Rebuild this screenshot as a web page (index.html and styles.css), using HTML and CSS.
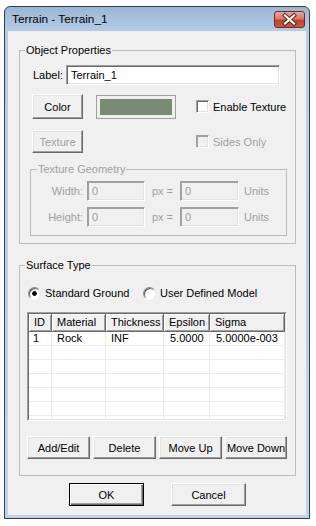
FILE: index.html
```html
<!DOCTYPE html>
<html>
<head>
<meta charset="utf-8">
<title>Terrain - Terrain_1</title>
<link rel="stylesheet" href="styles.css">
</head>
<body>
<div class="window">
  <div class="titlebar">
    <span class="title">Terrain - Terrain_1</span>
    <div class="close">
      <svg width="31" height="17" viewBox="0 0 31 17">
        <path d="M11 4.5 L20 12.5 M20 4.5 L11 12.5" stroke="#5a2a22" stroke-width="4.2" stroke-linecap="square" fill="none"/>
        <path d="M11 4.5 L20 12.5 M20 4.5 L11 12.5" stroke="#ffffff" stroke-width="2.2" stroke-linecap="square" fill="none"/>
      </svg>
    </div>
  </div>
  <div class="client">
    <fieldset class="group group-object">
      <legend>Object Properties</legend>
      <div class="row row-label">
        <span class="lbl">Label:</span>
        <div class="edit edit-label">Terrain_1</div>
      </div>
      <div class="row row-color">
        <div class="btn btn-small">Color</div>
        <div class="swatch"><div class="swatch-fill"></div></div>
        <div class="check check-enable"><span class="box"></span><span>Enable Texture</span></div>
      </div>
      <div class="row row-texture">
        <div class="btn btn-small btn-disabled">Texture</div>
        <div class="check check-sides disabled"><span class="box"></span><span>Sides Only</span></div>
      </div>
      <fieldset class="group group-geom disabled">
        <legend>Texture Geometry</legend>
        <div class="geom-row geom-first">
          <span class="geom-lbl">Width:</span>
          <div class="edit edit-disabled edit-px">0</div>
          <span class="geom-eq">px =</span>
          <div class="edit edit-disabled edit-units">0</div>
          <span class="geom-units">Units</span>
        </div>
        <div class="geom-row geom-second">
          <span class="geom-lbl">Height:</span>
          <div class="edit edit-disabled edit-px">0</div>
          <span class="geom-eq">px =</span>
          <div class="edit edit-disabled edit-units">0</div>
          <span class="geom-units">Units</span>
        </div>
      </fieldset>
    </fieldset>

    <fieldset class="group group-surface">
      <legend>Surface Type</legend>
      <div class="row row-radios">
        <div class="radio radio-first"><span class="dot checked"></span><span>Standard Ground</span></div>
        <div class="radio"><span class="dot"></span><span>User Defined Model</span></div>
      </div>
      <div class="list">
        <div class="list-inner">
          <div class="grid-row grid-head">
            <div class="hcell">ID</div>
            <div class="hcell">Material</div>
            <div class="hcell">Thickness</div>
            <div class="hcell">Epsilon</div>
            <div class="hcell">Sigma</div>
          </div>
          <div class="grid-body">
            <div class="grid-row">
              <div class="cell cell-id">1</div>
              <div class="cell">Rock</div>
              <div class="cell">INF</div>
              <div class="cell cell-num">5.0000</div>
              <div class="cell cell-num">5.0000e-003</div>
            </div>
            <div class="grid-row"><div class="cell"></div><div class="cell"></div><div class="cell"></div><div class="cell"></div><div class="cell"></div></div>
            <div class="grid-row"><div class="cell"></div><div class="cell"></div><div class="cell"></div><div class="cell"></div><div class="cell"></div></div>
            <div class="grid-row"><div class="cell"></div><div class="cell"></div><div class="cell"></div><div class="cell"></div><div class="cell"></div></div>
            <div class="grid-row"><div class="cell"></div><div class="cell"></div><div class="cell"></div><div class="cell"></div><div class="cell"></div></div>
            <div class="grid-row"><div class="cell"></div><div class="cell"></div><div class="cell"></div><div class="cell"></div><div class="cell"></div></div>
            <div class="grid-row"><div class="cell"></div><div class="cell"></div><div class="cell"></div><div class="cell"></div><div class="cell"></div></div>
          </div>
        </div>
      </div>
      <div class="row row-actions">
        <div class="btn btn-action">Add/Edit</div>
        <div class="btn btn-action">Delete</div>
        <div class="btn btn-action">Move Up</div>
        <div class="btn btn-action btn-last">Move Down</div>
      </div>
    </fieldset>

    <div class="row row-dialog">
      <div class="btn btn-dialog btn-default">OK</div>
      <div class="btn btn-dialog btn-cancel">Cancel</div>
    </div>
  </div>
</div>
</body>
</html>
```
FILE: styles.css
```css
* { box-sizing: border-box; }
html, body { margin: 0; padding: 0; background: #ffffff; }
body {
  font-family: "Liberation Sans", Arial, sans-serif;
  font-size: 11px;
  color: #000000;
}

/* window frame */
.window {
  margin: 6px 0 0 4px;
  width: 306px;
  height: 513px;
  border: 1px solid #383e48;
  border-radius: 6px 6px 0 0;
  padding: 0 3px 3px 3px;
  background: linear-gradient(#9ab5d5 0px, #b6cde8 25px, #bfd4ec 100%);
  display: flex;
  flex-direction: column;
}
.titlebar {
  height: 24px;
  display: flex;
  align-items: flex-start;
  justify-content: space-between;
}
.title {
  margin: 5px 0 0 4px;
  font-size: 11.8px;
  line-height: 14px;
  color: #000;
}
.close {
  margin: 4px 1px 0 0;
  width: 31px;
  height: 17px;
  border: 1px solid #6e2c22;
  border-radius: 3px;
  background: linear-gradient(#e8a89a 0%, #d47a68 45%, #c0412e 55%, #c95a43 100%);
  display: flex;
}
.close svg { margin: -1px; display: block; }

.client {
  height: 484px;
  background: #f0f0f0;
  display: flex;
  flex-direction: column;
}

/* group boxes */
.group {
  margin: 0;
  padding: 0;
  border: 1px solid #bcbcbc;
  min-inline-size: 0;
}
.group > legend {
  padding: 0 1px;
  line-height: 14px;
  height: 14px;
}
.group-object {
  margin: 12px 0 0 11px;
  width: 277px;
}
.group-object > legend { margin-left: 5px; }

.row { display: flex; align-items: center; }

.row-label { margin-top: 8px; height: 20px; }
.lbl { margin-left: 13px; width: 33px; }
.edit {
  height: 20px;
  border: 1px solid;
  border-color: #a0a0a0 #ffffff #ffffff #a0a0a0;
  box-shadow: inset 1px 1px 0 #696969, inset -1px -1px 0 #e3e3e3;
  background: #ffffff;
  padding-left: 4px;
  line-height: 18px;
}
.edit-label { width: 214px; }

.btn {
  display: flex;
  align-items: center;
  justify-content: center;
  background: #f0f0f0;
  border: 1px solid;
  border-color: #ffffff #696969 #696969 #ffffff;
  box-shadow: inset -1px -1px 0 #a0a0a0, inset 1px 1px 0 #e3e3e3;
  line-height: 14px;
}
.btn-small { margin-left: 12px; width: 51px; }
.row-color { margin-top: 9px; height: 25px; }
.row-color .btn { height: 25px; }
.swatch {
  margin-left: 13px;
  width: 80px;
  height: 24px;
  border: 1px solid #a0a0a0;
  padding: 3px;
  background: #f0f0f0;
}
.swatch-fill { width: 100%; height: 100%; background: #7a8a74; }

.check { display: flex; align-items: center; }
.check .box {
  width: 13px;
  height: 13px;
  margin-right: 4px;
  border: 1px solid;
  border-color: #a0a0a0 #ffffff #ffffff #a0a0a0;
  box-shadow: inset 1px 1px 0 #696969, inset -1px -1px 0 #e3e3e3;
  background: #ffffff;
}
.check-enable { margin-left: 20px; }
.check-sides { margin-left: 113px; }
.disabled { color: #a0a0a0; }
.check.disabled .box {
  background: #f0f0f0;
  box-shadow: inset 1px 1px 0 #a0a0a0, inset -1px -1px 0 #e3e3e3;
}

.row-texture { margin-top: 11px; height: 23px; }
.row-texture .btn { height: 23px; }
.btn-disabled { color: #a0a0a0; }

.group-geom {
  margin: 9px 8px 7px 10px;
  width: 257px;
  padding-bottom: 8px;
}
.group-geom > legend { margin-left: 6px; }
.geom-row { display: flex; align-items: center; height: 20px; }
.geom-first { margin-top: 5px; }
.geom-second { margin-top: 6px; }
.geom-lbl { width: 53px; text-align: right; padding-right: 1px; }
.edit-disabled {
  background: #f0f0f0;
  color: #a0a0a0;
  box-shadow: inset 1px 1px 0 #a0a0a0, inset -1px -1px 0 #e3e3e3;
}
.edit-px { margin-left: 3px; width: 58px; }
.geom-eq { width: 35px; text-align: center; }
.edit-units { width: 59px; }
.geom-units { margin-left: 5px; }

/* surface type */
.group-surface {
  margin: 14px 0 0 11px;
  width: 277px;
  padding-bottom: 16px;
}
.group-surface > legend { margin-left: 5px; }
.row-radios { margin-top: 14px; height: 14px; }
.radio { display: flex; align-items: center; }
.radio-first { margin-left: 8px; width: 115px; }
.dot {
  width: 13px;
  height: 13px;
  margin-right: 4px;
  border-radius: 50%;
  border: 1px solid;
  border-color: #8a8a8a #e8e8e8 #ffffff #8a8a8a;
  box-shadow: inset 1px 1px 0 #5a5a5a;
  background: #ffffff;
}
.dot.checked {
  background: radial-gradient(circle at 50% 50%, #000000 0, #000000 2px, #ffffff 2.6px);
}

.list {
  margin: 12px 0 0 7px;
  width: 260px;
  height: 109px;
  border: 1px solid;
  border-color: #a0a0a0 #ffffff #ffffff #a0a0a0;
}
.list-inner {
  height: 100%;
  border: 1px solid;
  border-color: #696969 #e3e3e3 #e3e3e3 #696969;
  background: #ffffff;
  overflow: hidden;
}
.grid-row {
  display: grid;
  grid-template-columns: 23px 54px 58px 46px 75px;
}
.grid-head { height: 18px; }
.hcell {
  background: #f0f0f0;
  border-right: 1px solid #696969;
  border-bottom: 1px solid #696969;
  box-shadow: inset 1px 1px 0 #ffffff, inset -1px -1px 0 #a0a0a0;
  padding-left: 5px;
  line-height: 17px;
  white-space: nowrap;
  overflow: hidden;
}
.grid-body { height: 87px; overflow: hidden; }
.cell {
  height: 14px;
  line-height: 13px;
  border-right: 1px solid #ececec;
  border-bottom: 1px solid #ececec;
  padding-left: 5px;
  white-space: nowrap;
  overflow: hidden;
}
.cell-id { padding-left: 4px; }
.cell-num { padding-left: 6px; }

.row-actions { margin: 15px 0 0 7px; height: 23px; gap: 3px; }
.btn-action { width: 63px; height: 23px; }
.btn-last { width: 62px; }

.row-dialog { margin-top: 7px; height: 23px; }
.btn-dialog { width: 75px; height: 23px; }
.btn-default {
  margin-left: 61px;
  border: 1px solid #000000;
  box-shadow: inset 1px 1px 0 #ffffff, inset -1px -1px 0 #696969, inset -2px -2px 0 #a0a0a0;
}
.btn-cancel { margin-left: 27px; }
```
